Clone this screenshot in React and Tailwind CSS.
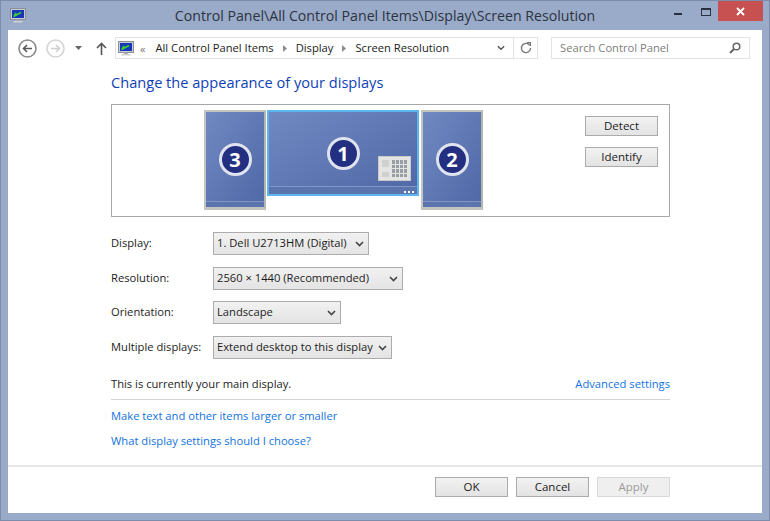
const font = { fontFamily: '"Open Sans", "Noto Sans", sans-serif' };

const Chevron = ({ className = 'w-[9px] h-[6px] text-[#444]' }) => (
  <svg viewBox="0 0 9 6" className={className} fill="none" stroke="currentColor" strokeWidth="1.6">
    <path d="M1 1l3.5 3.5L8 1" />
  </svg>
);

const MonitorIcon = () => (
  <svg viewBox="0 0 16 15" className="w-[16px] h-[15px]">
    <rect x="0.5" y="0.5" width="15" height="11" fill="#c9ccd0" stroke="#8c9096" />
    <rect x="2" y="2" width="12" height="8" fill="#1539b8" />
    <path d="M3.5 8.5L11 4.5M4 8.5l2-3.5" stroke="#3fd02f" strokeWidth="1.6" fill="none" />
    <rect x="6" y="11.5" width="4" height="1.5" fill="#a8acb2" />
    <rect x="3.5" y="13" width="9" height="1.5" fill="#d0d2d6" />
  </svg>
);

const NavCircle = ({ dim }) => (
  <svg viewBox="0 0 19 19" className="w-[19px] h-[19px]" fill="none">
    <circle cx="9.5" cy="9.5" r="8.5" stroke={dim ? '#d4d4d4' : '#8a8a8a'} strokeWidth="1.6" />
    {dim ? (
      <path d="M5 9.5h8.5M10 6l3.5 3.5L10 13" stroke="#cfcfcf" strokeWidth="1.5" />
    ) : (
      <path d="M14 9.5H5.5M9 6L5.5 9.5 9 13" stroke="#5a5a5a" strokeWidth="1.6" />
    )}
  </svg>
);

const Crumb = ({ children }) => (
  <>
    <span>{children}</span>
    <svg viewBox="0 0 4 7" className="w-[4px] h-[7px] mx-[9px]">
      <path d="M0 0l4 3.5L0 7z" fill="#8b8b8b" />
    </svg>
  </>
);

const Badge = ({ n }) => (
  <div className="w-[33px] h-[33px] rounded-full border-[3px] border-[#dfe3ee] bg-[#232f80] flex items-center justify-center text-white font-bold text-[20px] leading-none">
    {n}
  </div>
);

const SideMonitor = ({ n }) => (
  <div className="w-[62px] h-[100px] border-2 border-[#c4c4c0] border-r-[#b5b5b0] border-b-[3px] flex flex-col bg-gradient-to-br from-[#7189c2] to-[#4f68a6]">
    <div className="flex-1 flex items-center justify-center pt-[6px]">
      <Badge n={n} />
    </div>
    <div className="h-[6px] bg-[#5c74ae] border-t border-[#8296c6]" />
  </div>
);

const PrimaryMonitor = () => (
  <div className="relative w-[152px] h-[86px] border-2 border-[#5ab6ec] flex flex-col bg-gradient-to-br from-[#7189c2] to-[#4f68a6]">
    <div className="flex-1 flex justify-center pt-[25px]">
      <Badge n="1" />
    </div>
    <div className="h-[8px] bg-[#5c74ae] border-t border-[#8296c6]" />
    <div className="absolute right-[3px] bottom-[1px] flex gap-[2px]">
      <span className="w-[2px] h-[2px] bg-white" />
      <span className="w-[2px] h-[2px] bg-white" />
      <span className="w-[2px] h-[2px] bg-white" />
    </div>
    <div className="absolute right-[6px] top-[44px] w-[33px] h-[25px] bg-[#e4e5e2] border border-[#c9cac7] flex gap-[3px] p-[3px]">
      <div className="w-[7px] flex flex-col justify-between">
        <span className="h-[7px] bg-[#cfd1ce]" />
        <span className="h-[5px] bg-[#cfd1ce]" />
      </div>
      <div className="flex-1 grid grid-cols-4 grid-rows-4 gap-[1px]">
        {Array.from({ length: 16 }).map((_, i) => (
          <span key={i} className="bg-[#989ca5]" />
        ))}
      </div>
    </div>
  </div>
);

const Btn = ({ children, disabled }) => (
  <div
    className={`w-[73px] h-[20px] border flex items-center justify-center text-[11.5px] ${
      disabled
        ? 'border-[#dadada] bg-[#efefef] text-[#9a9a9a]'
        : 'border-[#ababab] bg-gradient-to-b from-[#f2f2f2] to-[#e3e3e3] text-[#1c1c1c]'
    }`}
  >
    {children}
  </div>
);

const rows = [
  { label: 'Display:', value: '1. Dell U2713HM (Digital)', w: 'w-[156px]', mt: 'mt-[15px]' },
  { label: 'Resolution:', value: '2560 × 1440 (Recommended)', w: 'w-[190px]', mt: 'mt-[12px]' },
  { label: 'Orientation:', value: 'Landscape', w: 'w-[128px]', mt: 'mt-[11px]' },
  { label: 'Multiple displays:', value: 'Extend desktop to this display', w: 'w-[179px]', mt: 'mt-[12px]' },
];

export default function App() {
  return (
    <div style={font} className="w-[770px] h-[521px] bg-[#9aabc9] border border-[#7d8cab] flex flex-col px-[7px] pb-[7px] text-[11.2px] text-[#1c1c1c]">
      {/* Title bar */}
      <div className="h-[29px] grid grid-cols-[1fr_auto_1fr] items-start -mx-[7px] shrink-0">
        <div className="pl-[9px] pt-[7px]">
          <MonitorIcon />
        </div>
        <div className="pt-[5px] text-[14.15px] leading-[20px] text-[#2b3340] whitespace-nowrap">
          Control Panel\All Control Panel Items\Display\Screen Resolution
        </div>
        <div className="flex justify-end items-start pr-[6px]">
          <div className="w-[8px] h-[2px] bg-[#2a3040] mt-[12px]" />
          <div className="w-[10px] h-[8px] border border-t-2 border-[#2a3040] mt-[7px] ml-[19px]" />
          <div className="w-[45px] h-[20px] bg-[#c75050] ml-[7px] flex items-center justify-center">
            <svg viewBox="0 0 9 9" className="w-[9px] h-[9px]" stroke="white" strokeWidth="1.8">
              <path d="M1 1l7 7M8 1L1 8" />
            </svg>
          </div>
        </div>
      </div>

      {/* Client area */}
      <div className="flex-1 bg-white flex flex-col min-h-0">
        {/* Nav row */}
        <div className="h-[22px] mt-[7px] flex items-center pl-[10px] pr-[12px] shrink-0">
          <NavCircle />
          <div className="w-[9px]" />
          <NavCircle dim />
          <svg viewBox="0 0 7 4" className="w-[7px] h-[4px] ml-[10px]">
            <path d="M0 0h7L3.5 4z" fill="#666" />
          </svg>
          <svg viewBox="0 0 11 13" className="w-[11px] h-[13px] ml-[14px]" fill="none" stroke="#555" strokeWidth="1.6">
            <path d="M5.5 13V1.5M1 6l4.5-4.5L10 6" />
          </svg>
          <div className="ml-[8px] w-[423px] h-[22px] border border-[#e2e3e5] flex items-center text-[#1c1c1c]">
            <div className="w-[398px] flex items-center h-full pl-[2px] pr-[8px] border-r border-[#e2e3e5]">
              <MonitorIcon />
              <span className="ml-[6px] mr-[10px] text-[#777] text-[11px] leading-none">«</span>
              <Crumb>All Control Panel Items</Crumb>
              <Crumb>Display</Crumb>
              <span>Screen Resolution</span>
              <Chevron className="w-[8px] h-[6px] text-[#555] ml-auto" />
            </div>
            <div className="flex-1 flex justify-center">
              <svg viewBox="0 0 12 12" className="w-[12px] h-[12px]" fill="none" stroke="#777" strokeWidth="1.4">
                <path d="M9.8 3.4A4.6 4.6 0 1 0 10.6 6" />
                <path d="M7 .7h3.4v3.2" strokeWidth="1.2" />
              </svg>
            </div>
          </div>
          <div className="ml-[13px] flex-1 h-[22px] border border-[#e2e3e5] flex items-center justify-between pl-[8px] pr-[8px] text-[#7d7d7d]">
            <span>Search Control Panel</span>
            <svg viewBox="0 0 12 12" className="w-[12px] h-[12px]" fill="none" stroke="#666" strokeWidth="1.5">
              <circle cx="7.5" cy="4.5" r="3.3" />
              <path d="M5 7l-4 4" strokeWidth="2" />
            </svg>
          </div>
        </div>

        {/* Main */}
        <div className="flex-1 ml-[103px] w-[559px] flex flex-col">
          <h1 className="mt-[12px] h-[22px] text-[14.6px] leading-[22px] font-normal text-[#0f3fb5]">
            Change the appearance of your displays
          </h1>
          <div className="mt-[11px] h-[113px] border border-[#a8a8a8] flex justify-between items-start pl-[92px] pr-[11px] pt-[5px]">
            <div className="flex items-start">
              <SideMonitor n="3" />
              <div className="ml-[1px]">
                <PrimaryMonitor />
              </div>
              <div className="ml-[2px]">
                <SideMonitor n="2" />
              </div>
            </div>
            <div className="mt-[6px] flex flex-col gap-[11px]">
              <Btn>Detect</Btn>
              <Btn>Identify</Btn>
            </div>
          </div>

          {rows.map((r) => (
            <div key={r.label} className={`${r.mt} flex items-center h-[23px]`}>
              <div className="w-[102px]">{r.label}</div>
              <div className={`${r.w} h-[23px] border border-[#acacac] bg-gradient-to-b from-[#f1f1f1] to-[#e4e4e4] flex items-center justify-between pl-[3px] pr-[4px]`}>
                <span className="whitespace-nowrap">{r.value}</span>
                <Chevron />
              </div>
            </div>
          ))}

          <div className="mt-[17px] flex justify-between leading-[16px]">
            <span>This is currently your main display.</span>
            <span className="text-[#1273e0]">Advanced settings</span>
          </div>
          <div className="mt-[7px] h-[1px] bg-[#d4d4d4]" />
          <div className="mt-[8px] leading-[16px] text-[#1273e0]">Make text and other items larger or smaller</div>
          <div className="mt-[9px] leading-[16px] text-[#1273e0]">What display settings should I choose?</div>
        </div>

        {/* Footer */}
        <div className="h-[48px] border-t-2 border-[#e6e6e6] flex justify-end items-start gap-[8px] pr-[92px] pt-[10px] shrink-0">
          <Btn>OK</Btn>
          <Btn>Cancel</Btn>
          <Btn disabled>Apply</Btn>
        </div>
      </div>
    </div>
  );
}
